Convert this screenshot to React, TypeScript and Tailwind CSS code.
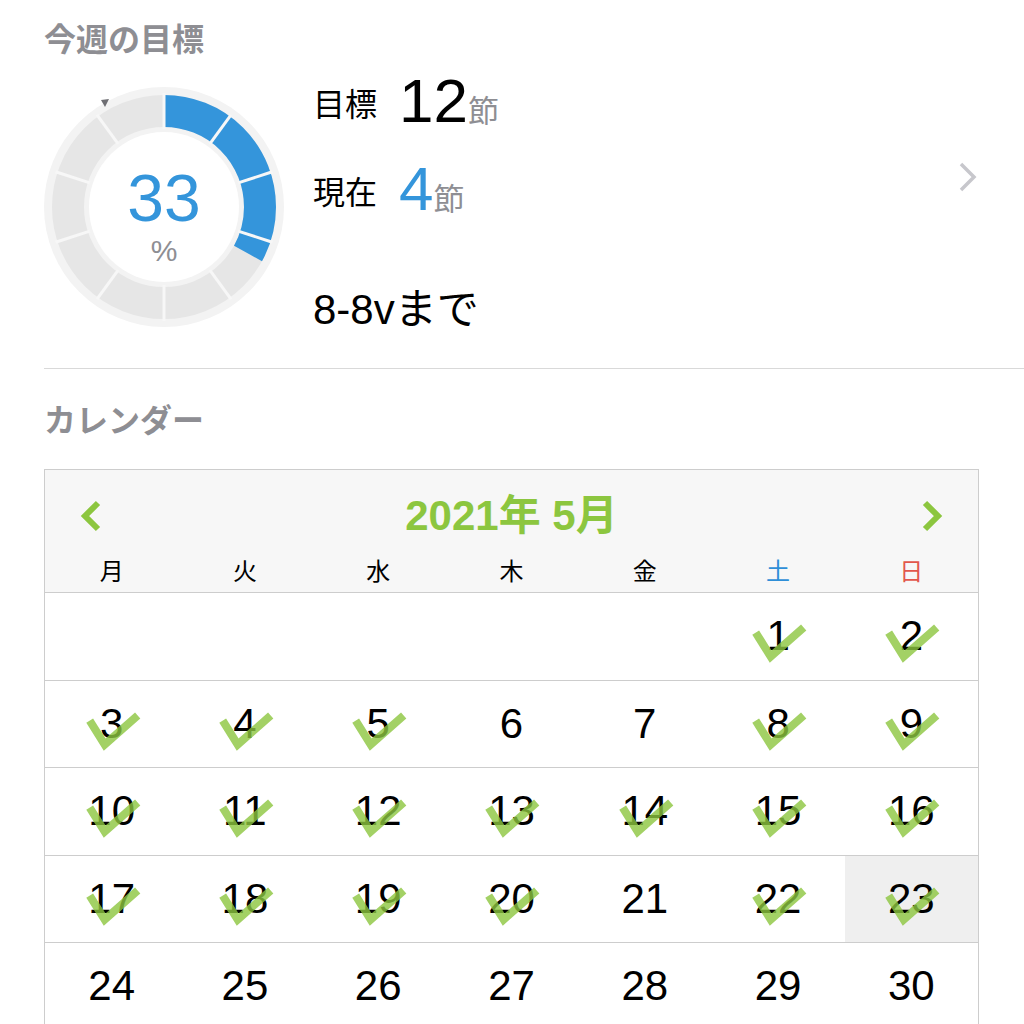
import React from "react";

const FONT = { fontFamily: '"Liberation Sans", "Noto Sans CJK JP", sans-serif' };

function Donut() {
  const r = 96;
  const c = 2 * Math.PI * r;
  const pct = 0.33;
  const lines = Array.from({ length: 10 }, (_, i) => i * 36);
  return (
    <svg width="240" height="240" viewBox="0 0 240 240" className="shrink-0">
      <circle cx="120" cy="120" r="120" fill="#f3f3f3" />
      <circle cx="120" cy="120" r={r} fill="none" stroke="#e6e6e6" strokeWidth="32" />
      <circle
        cx="120"
        cy="120"
        r={r}
        fill="none"
        stroke="#3495db"
        strokeWidth="32"
        strokeDasharray={`${c * pct} ${c}`}
        transform="rotate(-90 120 120)"
      />
      {lines.map((a) => {
        const rad = ((a - 90) * Math.PI) / 180;
        return (
          <line
            key={a}
            x1={120 + 78 * Math.cos(rad)}
            y1={120 + 78 * Math.sin(rad)}
            x2={120 + 114 * Math.cos(rad)}
            y2={120 + 114 * Math.sin(rad)}
            stroke="#f7f7f7"
            strokeWidth="3"
          />
        );
      })}
      <circle cx="120" cy="120" r="75" fill="#ffffff" />
      <polygon points="57,13 65,12 61,20" fill="#6e6e73" />
    </svg>
  );
}

function Check() {
  return (
    <svg
      width="56"
      height="42"
      viewBox="0 0 56 42"
      className="absolute pointer-events-none"
      style={{ left: "50%", top: "50%", transform: "translate(-47%, -32%)" }}
    >
      <polyline
        points="4,10 19,34 52,5"
        fill="none"
        stroke="#8cc63f"
        strokeOpacity="0.8"
        strokeWidth="8"
        strokeLinejoin="miter"
      />
    </svg>
  );
}

const checked = new Set([1, 2, 3, 4, 5, 8, 9, 10, 11, 12, 13, 14, 15, 16, 17, 18, 19, 20, 22, 23]);

export default function App() {
  const weeks: (number | null)[][] = [
    [null, null, null, null, null, 1, 2],
    [3, 4, 5, 6, 7, 8, 9],
    [10, 11, 12, 13, 14, 15, 16],
    [17, 18, 19, 20, 21, 22, 23],
    [24, 25, 26, 27, 28, 29, 30],
  ];
  const days = [
    { d: "月", c: "text-black" },
    { d: "火", c: "text-black" },
    { d: "水", c: "text-black" },
    { d: "木", c: "text-black" },
    { d: "金", c: "text-black" },
    { d: "土", c: "text-[#2f8fd8]" },
    { d: "日", c: "text-[#e2574c]" },
  ];
  return (
    <div className="w-[1024px] min-h-[1024px] bg-white pl-[44px]" style={FONT}>
      <h2 className="pt-[20px] text-[32px] leading-[40px] font-bold text-[#8e8e93]">今週の目標</h2>
      <div className="flex mt-[27px]">
        <div className="relative w-[240px] h-[240px]">
          <Donut />
          <div className="absolute inset-0 flex flex-col items-center justify-center">
            <div className="text-[66px] leading-[66px] text-[#3495db] mt-[18px]">33</div>
            <div className="text-[30px] leading-[32px] text-[#8e8e93] mt-[4px]">%</div>
          </div>
        </div>
        <div className="ml-[29px] flex-1 flex flex-col pr-[46px]">
          <div className="flex items-baseline h-[50px] mt-[-18px]">
            <span className="text-[32px] leading-[40px] text-black relative top-[-6px]">目標</span>
            <span className="text-[62px] leading-[64px] text-black ml-[22px]">12</span>
            <span className="text-[31px] leading-[40px] text-[#8e8e93]">節</span>
          </div>
          <div className="flex items-center mt-[38px]">
            <div className="flex items-baseline flex-1">
              <span className="text-[32px] leading-[40px] text-black relative top-[-6px]">現在</span>
              <span className="text-[62px] leading-[64px] text-[#3495db] ml-[22px]">4</span>
              <span className="text-[31px] leading-[40px] text-[#8e8e93]">節</span>
            </div>
            <svg width="20" height="32" viewBox="0 0 20 32" className="mt-[-24px]">
              <polyline points="3,3 16,16 3,29" fill="none" stroke="#c7c7cc" strokeWidth="3.5" />
            </svg>
          </div>
          <div className="text-[42px] leading-[44px] text-black mt-[67px]">8-8vまで</div>
        </div>
      </div>
      <div className="mt-[36px] border-t border-[#d9d9d9]" />
      <h2 className="mt-[32px] text-[32px] leading-[40px] font-bold text-[#8e8e93]">カレンダー</h2>
      <div className="mt-[28px] w-[935px] border border-[#cdcdcd]">
        <div className="bg-[#f7f7f7] border-b border-[#cdcdcd]">
          <div className="flex items-center justify-between h-[80px] px-[34px] pt-[12px]">
            <svg width="24" height="34" viewBox="0 0 24 34">
              <polyline points="19,4 6,17 19,30" fill="none" stroke="#8cc63f" strokeWidth="6" />
            </svg>
            <div className="text-[42px] font-bold text-[#8cc63f] leading-[48px]">2021年 5月</div>
            <svg width="24" height="34" viewBox="0 0 24 34">
              <polyline points="5,4 18,17 5,30" fill="none" stroke="#8cc63f" strokeWidth="6" />
            </svg>
          </div>
          <div className="grid grid-cols-7 h-[42px] items-start">
            {days.map((x) => (
              <div key={x.d} className={`text-center text-[24px] leading-[36px] pt-[4px] ${x.c}`}>
                {x.d}
              </div>
            ))}
          </div>
        </div>
        {weeks.map((w, i) => (
          <div key={i} className="grid grid-cols-7 h-[87.5px] border-b border-[#cdcdcd]">
            {w.map((d, j) => (
              <div
                key={j}
                className={`relative flex items-center justify-center ${d === 23 ? "bg-[#efefef]" : ""}`}
              >
                {d !== null && (
                  <span className="text-[42px] leading-[44px] text-black">{d}</span>
                )}
                {d !== null && checked.has(d) && <Check />}
              </div>
            ))}
          </div>
        ))}
      </div>
    </div>
  );
}
